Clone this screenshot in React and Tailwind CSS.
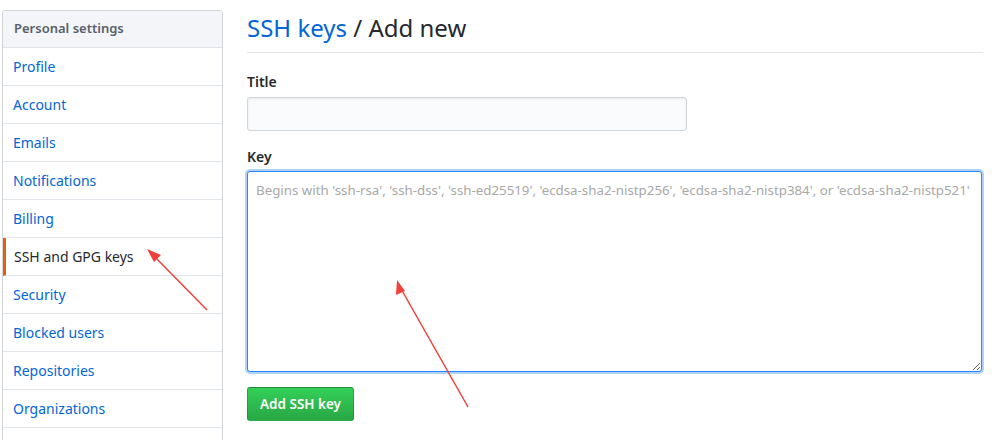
const links = [
  'Profile',
  'Account',
  'Emails',
  'Notifications',
  'Billing',
  'SSH and GPG keys',
  'Security',
  'Blocked users',
  'Repositories',
  'Organizations',
  '',
];

const Sidebar = () => (
  <nav className="w-[221px] shrink-0 border border-[#d1d5da] rounded-[3px] bg-white overflow-hidden">
    <h3 className="h-[37px] flex items-center px-[11px] bg-[#f3f5f8] border-b border-[#e1e4e8] text-[13px] font-semibold text-[#586069]">
      Personal settings
    </h3>
    {links.map((name, i) => {
      const active = name === 'SSH and GPG keys';
      return (
        <div
          key={i}
          className={`h-[38px] flex items-center text-[14px] border-b border-[#e1e4e8] ${
            active
              ? 'border-l-[3px] border-l-[#e36209] pl-[8px] text-[#24292e]'
              : 'pl-[10px] text-[#0366d6]'
          }`}
        >
          {name}
        </div>
      );
    })}
  </nav>
);

const Arrows = () => (
  <svg className="absolute inset-0 pointer-events-none" width="995" height="440">
    <g stroke="#f0403a" strokeWidth="1.5" fill="#f0403a">
      <line x1="207" y1="310" x2="152" y2="254" />
      <polygon points="147,249 161,255 154,262" stroke="none" />
      <line x1="468" y1="407" x2="400" y2="287" />
      <polygon points="397,280 405,291 396,295" stroke="none" />
    </g>
  </svg>
);

export default function App() {
  return (
    <div
      className="relative w-[995px] h-[440px] overflow-hidden bg-white"
      style={{ fontFamily: '"Noto Sans", "Liberation Sans", sans-serif' }}
    >
      <div className="flex gap-[24px] pl-[2px] pt-[10px]">
        <Sidebar />
        <main className="w-[736px] -mt-[10px]">
          <div className="border-b border-[#e1e4e8] pt-[12px] pb-[8px]">
            <h2 className="text-[24px] leading-[32px] font-normal text-[#24292e]">
              <span className="text-[#0366d6]">SSH keys</span> / Add new
            </h2>
          </div>
          <div className="mt-[19px]">
            <label className="block text-[14px] font-semibold text-[#24292e] leading-[20px]">
              Title
            </label>
            <input className="mt-[5px] block w-[440px] h-[34px] bg-[#fafbfc] border border-[#d1d5da] rounded-[3px] shadow-[inset_0_1px_2px_rgba(27,31,35,0.075)] outline-none" />
          </div>
          <div className="mt-[16px]">
            <label className="block text-[14px] font-semibold text-[#24292e] leading-[20px]">
              Key
            </label>
            <textarea
              className="mt-[4px] block w-[735px] h-[201px] resize-y bg-white border border-[#2188ff] rounded-[3px] shadow-[0_0_0_2px_rgba(3,102,214,0.3)] outline-none px-[8px] py-[8px] text-[13.3px] leading-[20px] placeholder:text-[#a8a8a8]"
              placeholder="Begins with 'ssh-rsa', 'ssh-dss', 'ssh-ed25519', 'ecdsa-sha2-nistp256', 'ecdsa-sha2-nistp384', or 'ecdsa-sha2-nistp521'"
            />
          </div>
          <button className="mt-[15px] h-[34px] px-[12px] text-[13.5px] font-semibold text-white rounded-[3px] border border-[rgba(27,31,35,0.2)] bg-gradient-to-b from-[#34d058] to-[#28a745]">
            Add SSH key
          </button>
        </main>
      </div>
      <Arrows />
    </div>
  );
}
